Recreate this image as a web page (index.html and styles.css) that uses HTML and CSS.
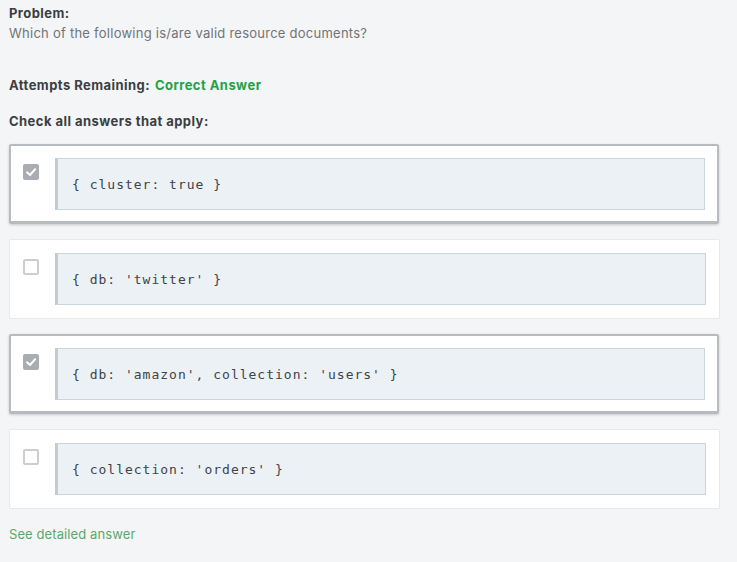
FILE: index.html
```html
<!DOCTYPE html>
<html>
<head>
<meta charset="utf-8">
<link rel="stylesheet" href="styles.css">
</head>
<body>
<div class="page">
  <div class="problem">
    <div class="label">Problem:</div>
    <div class="question">Which of the following is/are valid resource documents?</div>
  </div>
  <div class="attempts"><span class="label">Attempts Remaining:</span> <span class="correct">Correct Answer</span></div>
  <div class="instr label">Check all answers that apply:</div>
  <div class="options">
    <div class="card selected">
      <span class="box checked"><svg viewBox="0 0 16 16" width="16" height="16"><path d="M4 8.3 L7 11 L12.2 5.2" fill="none" stroke="#fff" stroke-width="2" stroke-linecap="round" stroke-linejoin="round"/></svg></span>
      <div class="code">{ cluster: true }</div>
    </div>
    <div class="card">
      <span class="box"></span>
      <div class="code">{ db: 'twitter' }</div>
    </div>
    <div class="card selected">
      <span class="box checked"><svg viewBox="0 0 16 16" width="16" height="16"><path d="M4 8.3 L7 11 L12.2 5.2" fill="none" stroke="#fff" stroke-width="2" stroke-linecap="round" stroke-linejoin="round"/></svg></span>
      <div class="code">{ db: 'amazon', collection: 'users' }</div>
    </div>
    <div class="card">
      <span class="box"></span>
      <div class="code">{ collection: 'orders' }</div>
    </div>
  </div>
  <div class="detail">See detailed answer</div>
</div>
</body>
</html>
```
FILE: styles.css
```css
html, body {
  margin: 0;
  padding: 0;
  background: #f4f5f6;
}
.page {
  padding: 3px 17px 0 9px;
  font-family: Inter, "Liberation Sans", sans-serif;
  font-size: 13px;
  letter-spacing: 0.25px;
  color: #3d4044;
}
.problem {
  line-height: 20px;
}
.label {
  font-weight: 700;
  color: #3b3e42;
  letter-spacing: 0.45px;
}
.question {
  color: #707478;
}
.attempts {
  margin-top: 32px;
  line-height: 20px;
}
.correct {
  font-weight: 700;
  color: #24a148;
  margin-left: 1px;
  letter-spacing: 0.45px;
}
.instr {
  margin-top: 16px;
  line-height: 20px;
}
.options {
  margin-top: 13px;
  display: flex;
  flex-direction: column;
  gap: 15px;
}
.card {
  display: flex;
  align-items: flex-start;
  gap: 16px;
  background: #fff;
  border: 1px solid #e7e9eb;
  border-radius: 2px;
  padding: 13px;
  height: 52px;
}
.card.selected {
  border: 2px solid #b7bbbf;
  border-bottom-width: 3px;
  padding: 12px 12px 11px 12px;
  margin-right: 1px;
  box-shadow: 0 1px 3px rgba(0,0,0,0.18);
}
.box {
  flex: none;
  width: 16px;
  height: 16px;
  box-sizing: border-box;
  border: 2px solid #cbced1;
  border-radius: 2px;
  background: #fff;
  margin-top: 6px;
  display: block;
}
.box.checked {
  border: none;
  background: #a9adb1;
}
.box svg {
  display: block;
}
.code {
  flex: 1;
  height: 52px;
  box-sizing: border-box;
  background: #ebf1f5;
  border: 1px solid #cbd5dc;
  border-left: 3px solid #c3cbd2;
  padding-left: 14px;
  display: flex;
  align-items: center;
  font-family: "DejaVu Sans Mono", "Liberation Mono", monospace;
  font-size: 13px;
  letter-spacing: 1px;
  color: #3f4347;
}
.detail {
  margin-top: 15px;
  color: #5aa86c;
  letter-spacing: 0.1px;
  line-height: 20px;
}
```
